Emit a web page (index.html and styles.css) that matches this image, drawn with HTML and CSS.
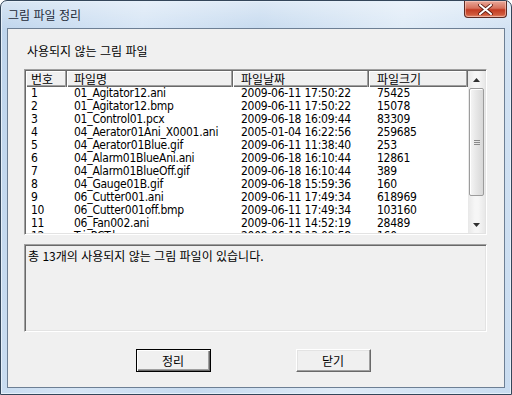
FILE: index.html
```html
<!DOCTYPE html>
<html lang="ko">
<head>
    <meta charset="UTF-8">
    <title>그림 파일 정리</title>
    <link rel="stylesheet" href="styles.css">
</head>
<body>
    <div class="window">
        <div class="titlebar">
            <span class="title">그림 파일 정리</span>
            <div class="close-btn">
                <svg width="15" height="11" viewBox="0 0 15 11">
                    <path d="M2 1 L13 10 M13 1 L2 10" stroke="#5a1a10" stroke-width="3.6" stroke-linecap="round"/>
                    <path d="M2 1 L13 10 M13 1 L2 10" stroke="#ffffff" stroke-width="2" stroke-linecap="round"/>
                </svg>
            </div>
        </div>

        <div class="client">
            <div class="caption">사용되지 않는 그림 파일</div>

            <div class="listview">
                <div class="list-body">
                    <div class="list-head">
                        <div class="hcell c1">번호</div>
                        <div class="hcell c2">파일명</div>
                        <div class="hcell c3">파일날짜</div>
                        <div class="hcell c4">파일크기</div>
                    </div>
                    <div class="list-rows">
                        <div class="row"><span class="c1">1</span><span class="c2">01_Agitator12.ani</span><span class="c3">2009-06-11 17:50:22</span><span class="c4">75425</span></div>
                        <div class="row"><span class="c1">2</span><span class="c2">01_Agitator12.bmp</span><span class="c3">2009-06-11 17:50:22</span><span class="c4">15078</span></div>
                        <div class="row"><span class="c1">3</span><span class="c2">01_Control01.pcx</span><span class="c3">2009-06-18 16:09:44</span><span class="c4">83309</span></div>
                        <div class="row"><span class="c1">4</span><span class="c2">04_Aerator01Ani_X0001.ani</span><span class="c3">2005-01-04 16:22:56</span><span class="c4">259685</span></div>
                        <div class="row"><span class="c1">5</span><span class="c2">04_Aerator01Blue.gif</span><span class="c3">2009-06-11 11:38:40</span><span class="c4">253</span></div>
                        <div class="row"><span class="c1">6</span><span class="c2">04_Alarm01BlueAni.ani</span><span class="c3">2009-06-18 16:10:44</span><span class="c4">12861</span></div>
                        <div class="row"><span class="c1">7</span><span class="c2">04_Alarm01BlueOff.gif</span><span class="c3">2009-06-18 16:10:44</span><span class="c4">389</span></div>
                        <div class="row"><span class="c1">8</span><span class="c2">04_Gauge01B.gif</span><span class="c3">2009-06-18 15:59:36</span><span class="c4">160</span></div>
                        <div class="row"><span class="c1">9</span><span class="c2">06_Cutter001.ani</span><span class="c3">2009-06-11 17:49:34</span><span class="c4">618969</span></div>
                        <div class="row"><span class="c1">10</span><span class="c2">06_Cutter001off.bmp</span><span class="c3">2009-06-11 17:49:34</span><span class="c4">103160</span></div>
                        <div class="row"><span class="c1">11</span><span class="c2">06_Fan002.ani</span><span class="c3">2009-06-11 14:52:19</span><span class="c4">28489</span></div>
                        <div class="row"><span class="c1">12</span><span class="c2">Tri_PCT.bmp</span><span class="c3">2009-06-18 13:09:58</span><span class="c4">160</span></div>
                    </div>
                </div>
                <div class="vscroll">
                    <div class="sb-btn">
                        <svg width="7" height="4" viewBox="0 0 7 4"><path d="M3.5 0 L7 4 L0 4 Z" fill="#303030"/></svg>
                    </div>
                    <div class="sb-track">
                        <div class="sb-thumb">
                            <svg width="6" height="5" viewBox="0 0 6 5"><path d="M0 0.5 H6 M0 2.5 H6 M0 4.5 H6" stroke="#8a8a8a" stroke-width="1"/></svg>
                        </div>
                    </div>
                    <div class="sb-btn">
                        <svg width="7" height="4" viewBox="0 0 7 4"><path d="M0 0 L7 0 L3.5 4 Z" fill="#303030"/></svg>
                    </div>
                </div>
            </div>

            <div class="status">총 13개의 사용되지 않는 그림 파일이 있습니다.</div>

            <div class="buttons">
                <button class="btn default">정리</button>
                <button class="btn">닫기</button>
            </div>
        </div>
    </div>
</body>
</html>
```

FILE: styles.css
```css
body {
    margin: 0;
    padding: 0;
    background: #ffffff;
    font-family: "Noto Sans CJK KR", sans-serif;
    font-size: 12px;
    color: #000000;
}

.window {
    width: 512px;
    height: 395px;
    box-sizing: border-box;
    border: 1px solid #34465a;
    border-radius: 7px 7px 0 0;
    padding: 0 6px 6px 6px;
    display: flex;
    flex-direction: column;
    background:
        linear-gradient(180deg, rgba(255, 255, 255, 0.4), rgba(255, 255, 255, 0) 30px),
        linear-gradient(100deg, #bdd4ec 0%, #d6e5f5 25%, #c6daef 45%, #dfebf7 70%, #c9dcf0 100%);
    box-shadow: inset 0 0 0 1px #e6f0fa;
}

/* title bar */
.titlebar {
    height: 27px;
    display: flex;
    justify-content: space-between;
    align-items: flex-start;
}

.title {
    padding: 7px 0 0 1px;
    line-height: 14px;
    color: #1e2a38;
}

.close-btn {
    width: 43px;
    height: 17px;
    margin-right: -2px;
    box-sizing: border-box;
    border: 1px solid #5b2a23;
    border-top: none;
    border-radius: 0 0 4px 4px;
    background: linear-gradient(180deg, #e9a99a 0%, #d6715c 45%, #c23b22 55%, #d05a3c 85%, #e48a6e 100%);
    box-shadow: inset 0 0 0 1px rgba(255, 220, 210, 0.5);
    display: flex;
    justify-content: center;
    align-items: center;
}

/* client area */
.client {
    flex: 1;
    border: 1px solid #6d7f94;
    background: #f0f0f0;
    padding: 15px 17px 0 16px;
    display: flex;
    flex-direction: column;
}

.caption {
    line-height: 14px;
    padding-left: 3px;
    margin-bottom: 11px;
}

/* list view */
.listview {
    height: 166px;
    box-sizing: border-box;
    border: 1px solid;
    border-color: #a0a0a0 #ffffff #ffffff #a0a0a0;
    box-shadow: inset 1px 1px 0 #696969, inset -1px -1px 0 #e3e3e3;
    padding: 1px;
    display: flex;
    background: #ffffff;
}

.list-body {
    flex: 1;
    overflow: hidden;
}

.list-head {
    display: flex;
    height: 16px;
    background: #f0f0f0;
    box-shadow: inset 0 -1px 0 #696969, inset 0 -2px 0 #a0a0a0, inset 0 1px 0 #ffffff;
}

.hcell {
    box-sizing: border-box;
    line-height: 15px;
    border-right: 1px solid #696969;
    box-shadow: inset -1px 0 0 #a0a0a0, inset 1px 0 0 #ffffff;
}

.c1 { width: 41px; padding-left: 5px; }
.c2 { width: 166px; padding-left: 7px; }
.c3 { width: 136px; padding-left: 8px; }
.c4 { width: 99px; padding-left: 8px; }

.row {
    display: flex;
    height: 13px;
    line-height: 13px;
    font-family: "DejaVu Sans Condensed", "Liberation Sans", sans-serif;
    font-size: 12px;
    letter-spacing: -0.25px;
    white-space: nowrap;
}

.row span {
    box-sizing: border-box;
    flex-shrink: 0;
    overflow: hidden;
}

/* scrollbar */
.vscroll {
    width: 17px;
    display: flex;
    flex-direction: column;
    background: linear-gradient(90deg, #e8e8e8, #f6f6f6 40%, #f6f6f6 60%, #e8e8e8);
}

.sb-btn {
    height: 17px;
    display: flex;
    justify-content: center;
    align-items: center;
}

.sb-track {
    flex: 1;
    padding: 0 1px;
}

.sb-thumb {
    height: 108px;
    box-sizing: border-box;
    border: 1px solid #9c9c9c;
    border-radius: 2px;
    background: linear-gradient(90deg, #f6f6f6, #e6e6e6 50%, #d8d8d8);
    box-shadow: inset 1px 1px 0 #ffffff;
    display: flex;
    justify-content: center;
    align-items: center;
}

/* status box */
.status {
    height: 88px;
    margin-top: 9px;
    box-sizing: border-box;
    border: 1px solid;
    border-color: #a0a0a0 #ffffff #ffffff #a0a0a0;
    box-shadow: inset 1px 1px 0 #696969, inset -1px -1px 0 #e3e3e3;
    padding: 4px 3px;
    line-height: 14px;
}

/* buttons */
.buttons {
    display: flex;
    justify-content: center;
    gap: 85px;
    margin-top: 17px;
    padding-right: 5px;
}

.btn {
    width: 75px;
    height: 23px;
    margin: 0;
    padding: 0;
    font-family: "Noto Sans CJK KR", sans-serif;
    font-size: 12px;
    color: #000000;
    background: #f0f0f0;
    border: 1px solid;
    border-color: #ffffff #696969 #696969 #ffffff;
    box-shadow: inset -1px -1px 0 #a0a0a0, inset 1px 1px 0 #e3e3e3;
}

.btn.default {
    border: 1px solid #000000;
    box-shadow: inset 1px 1px 0 #ffffff, inset -1px -1px 0 #696969, inset -2px -2px 0 #a0a0a0;
}
```
